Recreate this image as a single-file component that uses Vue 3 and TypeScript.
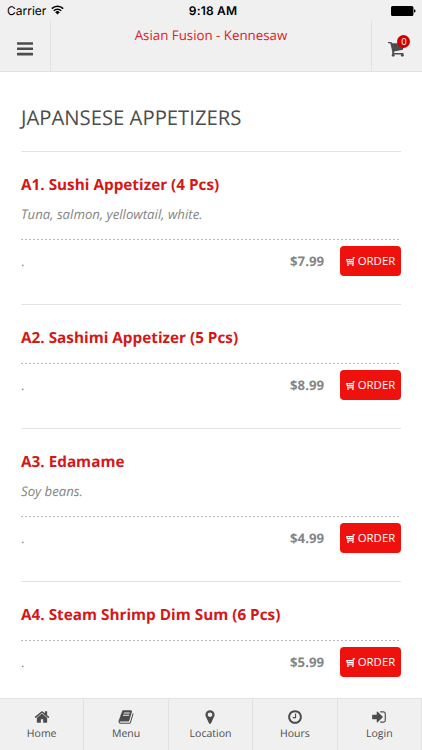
<script setup lang="ts">
interface MenuItem {
  title: string
  description?: string
  price: string
}
interface Tab {
  label: string
  path: string
}

const items: MenuItem[] = [
  { title: 'A1. Sushi Appetizer (4 Pcs)', description: 'Tuna, salmon, yellowtail, white.', price: '$7.99' },
  { title: 'A2. Sashimi Appetizer (5 Pcs)', price: '$8.99' },
  { title: 'A3. Edamame', description: 'Soy beans.', price: '$4.99' },
  { title: 'A4. Steam Shrimp Dim Sum (6 Pcs)', price: '$5.99' },
]

const tabs: Tab[] = [
  { label: 'Home', path: 'M1472 992v480q0 26-19 45t-45 19h-384v-384h-256v384h-384q-26 0-45-19t-19-45v-480q0-1 .5-3t.5-3l575-474 575 474q1 2 1 6zm223-69l-62 74q-8 9-21 11h-3q-13 0-21-7l-692-577-692 577q-12 8-24 7-13-2-21-11l-62-74q-8-10-7-23.5t11-21.5l719-599q32-26 76-26t76 26l244 204v-195q0-14 9-23t23-9h192q14 0 23 9t9 23v408l219 182q10 8 11 21.5t-7 23.5z' },
  { label: 'Menu', path: 'M1703 478q40 57 18 129l-275 906q-19 64-76.5 107.5t-122.5 43.5h-923q-77 0-148.5-53.5t-99.5-131.5q-24-67-2-127 0-4 3-27t4-37q1-8-3-21.5t-3-19.5q2-11 8-21t16.5-23.5 16.5-23.5q23-38 45-91.5t30-91.5q3-10 .5-30t-.5-28q3-11 17-28t17-23q21-36 42-92t25-90q1-9-2.5-32t.5-28q4-13 22-30.5t22-22.5q19-26 42.5-84.5t27.5-96.5q1-8-3-25.5t-2-26.5q2-8 9-18t18-23 17-21q8-12 16.5-30.5t15-35 16-36 19.5-32 26.5-23.5 36-11.5 47.5 5.5l-1 3q38-9 51-9h761q74 0 114 56t18 130l-274 906q-36 119-71.5 153.5t-128.5 34.5h-869q-27 0-38 15-11 16-1 43 24 70 144 70h923q29 0 56-15.5t35-41.5l300-987q7-22 5-57 38 15 59 43zm-1064 2q-4 13 2 22.5t20 9.5h608q13 0 25.5-9.5t16.5-22.5l21-64q4-13-2-22.5t-20-9.5h-608q-13 0-25.5 9.5t-16.5 22.5zm-83 256q-4 13 2 22.5t20 9.5h608q13 0 25.5-9.5t16.5-22.5l21-64q4-13-2-22.5t-20-9.5h-608q-13 0-25.5 9.5t-16.5 22.5z' },
  { label: 'Location', path: 'M1152 640q0-106-75-181t-181-75-181 75-75 181 75 181 181 75 181-75 75-181zm256 0q0 109-33 179l-364 774q-16 33-47.5 52t-67.5 19-67.5-19-46.5-52l-365-774q-33-70-33-179 0-212 150-362t362-150 362 150 150 362z' },
  { label: 'Hours', path: 'M1024 544v448q0 14-9 23t-23 9h-320q-14 0-23-9t-9-23v-64q0-14 9-23t23-9h224v-352q0-14 9-23t23-9h64q14 0 23 9t9 23zm416 352q0-148-73-273t-198-198-273-73-273 73-198 198-73 273 73 273 198 198 273 73 273-73 198-198 73-273zm224 0q0 209-103 385.5t-279.5 279.5-385.5 103-385.5-103-279.5-279.5-103-385.5 103-385.5 279.5-279.5 385.5-103 385.5 103 279.5 279.5 103 385.5z' },
  { label: 'Login', path: 'M1312 896q0 26-19 45l-544 544q-19 19-45 19t-45-19-19-45v-288h-448q-26 0-45-19t-19-45v-384q0-26 19-45t45-19h448v-288q0-26 19-45t45-19 45 19l544 544q19 19 19 45zm352-352v704q0 119-84.5 203.5t-203.5 84.5h-320q-13 0-22.5-9.5t-9.5-22.5q0-4-1-20t-.5-26.5 3-23.5 10-19.5 20.5-6.5h320q66 0 113-47t47-113v-704q0-66-47-113t-113-47h-312l-11.5-1-11.5-3-8-5.5-7-9-2-13.5q0-4-1-20t-.5-26.5 3-23.5 10-19.5 20.5-6.5h320q119 0 203.5 84.5t84.5 203.5z' },
]
</script>

<template>
  <div class="screen">
    <div class="status">
      <div class="carrier">
        <span>Carrier</span>
        <svg class="wifi" viewBox="0 0 13 10">
          <path d="M.8 3.6a8.2 8.2 0 0 1 11.4 0M2.8 5.8a5.3 5.3 0 0 1 7.4 0" fill="none" stroke="#000" stroke-width="1.6" />
          <path d="M6.5 9.5L4.2 7.2a3.3 3.3 0 0 1 4.6 0z" />
        </svg>
      </div>
      <span class="time">9:18 AM</span>
      <svg class="battery" viewBox="0 0 25 10">
        <rect width="22.4" height="10" rx="1.6" />
        <path d="M23 3.3q1.6.3 1.6 1.7T23 6.7z" />
      </svg>
    </div>
    <header class="header">
      <button class="nav-btn left" aria-label="Open menu">
        <svg class="bars" viewBox="0 0 16 14">
          <path d="M.8 1.5h14.4M.8 6.8h14.4M.8 12.1h14.4" stroke="#4c4c4c" stroke-width="2.6" stroke-linecap="round" />
        </svg>
      </button>
      <h1>Asian Fusion - Kennesaw</h1>
      <button class="nav-btn right" aria-label="Cart">
        <span class="cart-wrap">
          <svg class="cart" viewBox="0 0 17 15">
            <path d="M0 0h3.4l.6 1.2h12.5l-1.6 6.6-8.8 1.6v1.5h9.4v1.5H4.2V9.2L2.3 1.3H0z" />
            <circle cx="5.2" cy="13.3" r="1.4" />
            <circle cx="14.3" cy="13.3" r="1.4" />
          </svg>
          <span class="badge">0</span>
        </span>
      </button>
    </header>

    <main class="content">
      <h2>JAPANSESE APPETIZERS</h2>
      <section v-for="item in items" :key="item.title" class="item">
        <h3>{{ item.title }}</h3>
        <p v-if="item.description" class="desc">{{ item.description }}</p>
        <div class="dots"></div>
        <div class="row">
          <span class="note">.</span>
          <span class="price">{{ item.price }}</span>
          <button class="order">
            <svg viewBox="0 0 9 9">
              <path d="M9 .2H6.7V2H0l.9 3.4h5.8v.9H1v.9h6.7V1.2H9zM1.6 3.1h5.1v1H1.9z" fill-rule="evenodd" />
              <path d="M2.9 3h.7v1.3h-.7zM4.7 3h.7v1.3h-.7z" />
              <circle cx="2" cy="8.1" r=".9" />
              <circle cx="6.9" cy="8.1" r=".9" />
            </svg>
            <span>ORDER</span>
          </button>
        </div>
      </section>
    </main>

    <nav class="tabs">
      <a v-for="tab in tabs" :key="tab.label" class="tab">
        <svg viewBox="0 0 1792 1792"><path :d="tab.path" /></svg>
        <span>{{ tab.label }}</span>
      </a>
    </nav>
  </div>
</template>

<style>
body {
  margin: 0;
  overflow: hidden;
}
</style>

<style scoped>
* {
  box-sizing: border-box;
}
.screen {
  width: 422px;
  height: 750px;
  display: flex;
  flex-direction: column;
  background: #fff;
  font-family: 'Open Sans', sans-serif;
  color: #4c4c4c;
  overflow: hidden;
  text-rendering: geometricPrecision;
}
button {
  border: 0;
  padding: 0;
  background: none;
  font: inherit;
  color: inherit;
}
.status {
  flex: none;
  height: 20px;
  display: grid;
  grid-template-columns: 1fr auto 1fr;
  align-items: center;
  padding: 2px 6px 0 7px;
  background: #f0f0f0;
  color: #000;
  font-family: Inter, sans-serif;
  font-size: 12px;
  line-height: 18px;
}
.carrier {
  display: flex;
  align-items: center;
  gap: 5px;
}
.wifi {
  width: 13px;
  height: 10px;
  margin-bottom: 2px;
}
.time {
  font-weight: 600;
  letter-spacing: 0.2px;
  padding-left: 3px;
}
.battery {
  width: 25px;
  height: 10px;
  justify-self: end;
}
.header {
  flex: none;
  height: 52px;
  display: flex;
  justify-content: space-between;
  background: #f0f0f0;
  border-bottom: 1px solid #e2e2e2;
}
.header h1 {
  margin: 0;
  padding-top: 5px;
  font-size: 13.3px;
  line-height: 20px;
  font-weight: 400;
  color: #db2222;
}
.nav-btn {
  width: 51px;
  display: flex;
  align-items: center;
  justify-content: center;
}
.left {
  border-right: 1px solid #e2e2e2;
  padding-top: 6px;
}
.right {
  border-left: 1px solid #e2e2e2;
  padding-top: 7px;
}
.bars {
  width: 16px;
  height: 14px;
}
.cart-wrap {
  position: relative;
  display: flex;
}
.cart {
  width: 17px;
  height: 15px;
  fill: #4c4c4c;
}
.badge {
  position: absolute;
  left: 9px;
  top: -7px;
  width: 13px;
  height: 13px;
  border-radius: 50%;
  background: #cf0000;
  color: #fff;
  font-size: 9.5px;
  line-height: 13px;
  text-align: center;
}
.content {
  flex: 1;
  min-height: 0;
  overflow: hidden;
  padding: 0 21px;
}
h2 {
  margin: 0;
  height: 79px;
  padding-top: 30px;
  font-size: 20.3px;
  line-height: 30px;
  font-weight: 400;
  white-space: nowrap;
}
.item {
  border-top: 1px solid #e2e2e2;
  padding: 20px 0 28px;
}
h3 {
  margin: 0;
  padding-bottom: 2px;
  font-size: 15.3px;
  line-height: 26px;
  font-weight: 700;
  color: #d41717;
}
.desc {
  margin: 0;
  padding: 1px 0 2px;
  font-size: 13.2px;
  line-height: 26px;
  font-style: italic;
  color: #858585;
}
.dots {
  height: 1px;
  margin: 10px 0 6px;
  background: repeating-linear-gradient(90deg, #bababa 0 2px, transparent 2px 4px);
}
.row {
  height: 30px;
  display: flex;
  align-items: center;
  font-size: 13.2px;
  line-height: 18px;
  color: #858585;
}
.note {
  flex: 1;
}
.price {
  font-weight: 700;
  margin-right: 16px;
}
.order {
  width: 61px;
  height: 30px;
  border-radius: 4px;
  background: #ee110d;
  color: #fff;
  display: flex;
  align-items: center;
  justify-content: center;
  gap: 3px;
  font-size: 11.4px;
}
.order svg {
  width: 9px;
  height: 9px;
  fill: #fff;
}
.tabs {
  flex: none;
  height: 52px;
  display: grid;
  grid-template-columns: repeat(5, 1fr);
  background: #f0f0f0;
  border-top: 1px solid #e2e2e2;
}
.tab {
  display: flex;
  flex-direction: column;
  align-items: center;
  padding-top: 10px;
  border-right: 1px solid #e2e2e2;
  font-size: 10.5px;
  line-height: 18px;
}
.tab svg {
  width: 16px;
  height: 16px;
  fill: #4c4c4c;
}
</style>
